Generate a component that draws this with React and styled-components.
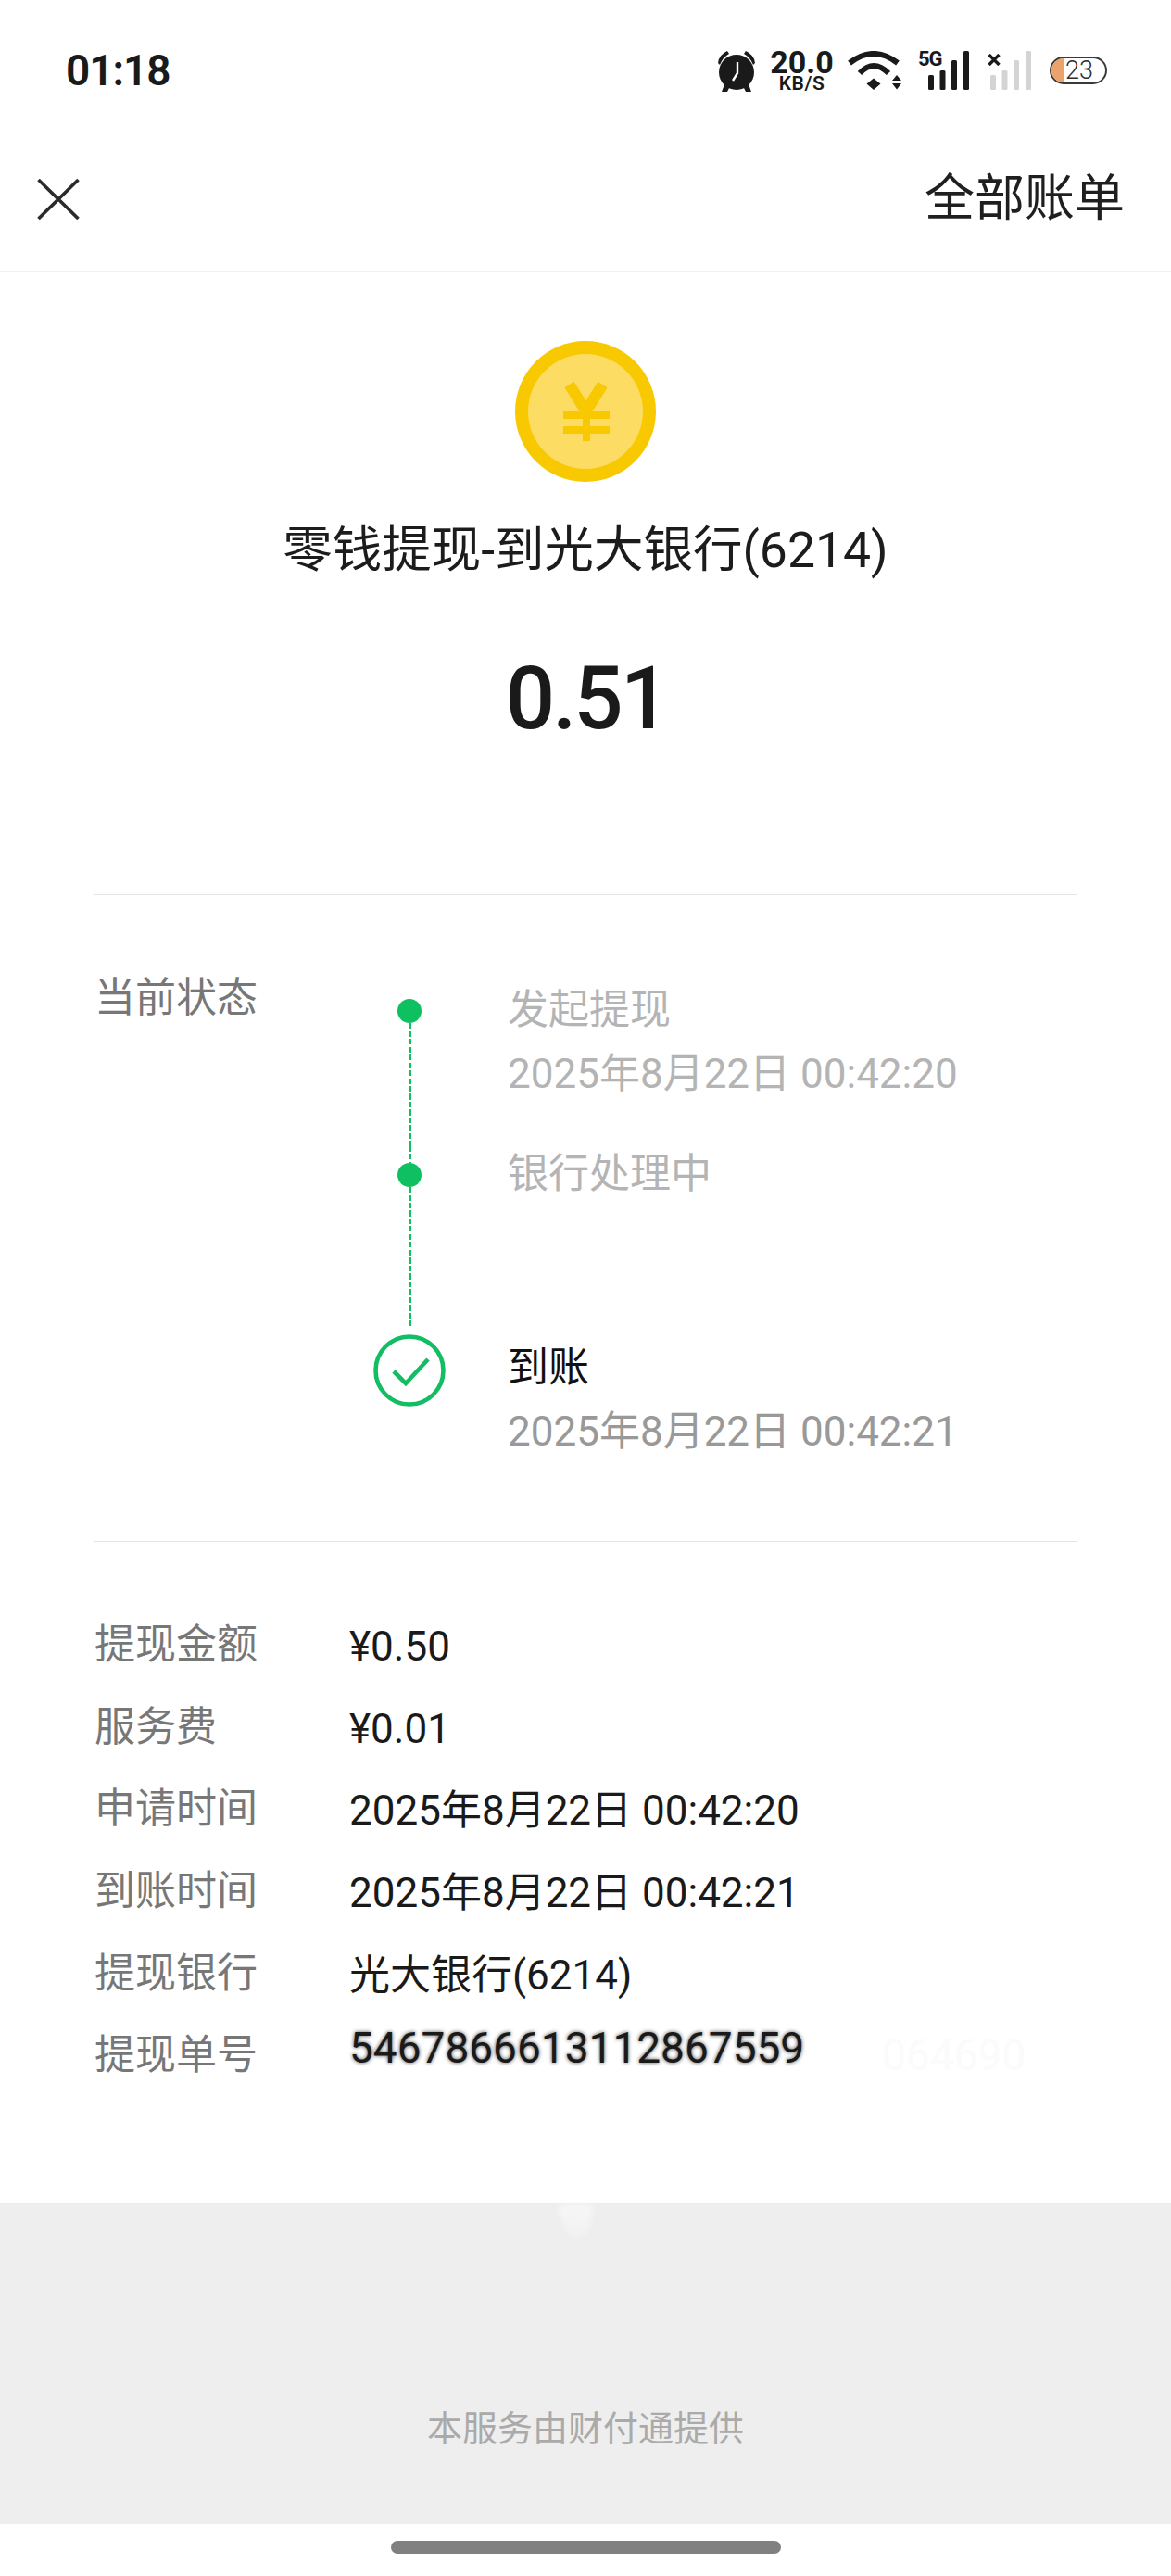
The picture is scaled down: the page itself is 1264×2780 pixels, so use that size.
import React from 'react';
import styled, { createGlobalStyle } from 'styled-components';

const GlobalStyle = createGlobalStyle`
  html, body {
    margin: 0;
    padding: 0;
    background: #fff;
  }
  * {
    box-sizing: border-box;
  }
`;

const details = [
  { label: '提现金额', value: '¥0.50' },
  { label: '服务费', value: '¥0.01' },
  { label: '申请时间', value: '2025年8月22日 00:42:20' },
  { label: '到账时间', value: '2025年8月22日 00:42:21' },
  { label: '提现银行', value: '光大银行(6214)' },
  { label: '提现单号', value: '5467866613112867559', smudged: true, ghost: '064690' },
];

function AlarmIcon() {
  return (
    <svg width="42" height="45" viewBox="0 0 42 45">
      <path d="M1 14 Q2 5 11 1 L13 4 Q6 8 3 16 Z" fill="#1a1a1a" />
      <path d="M41 14 Q40 5 31 1 L29 4 Q36 8 39 16 Z" fill="#1a1a1a" />
      <circle cx="21" cy="24" r="19" fill="#1a1a1a" />
      <path d="M8 37 L5 45 L11 45 L14 39 Z M34 37 L37 45 L31 45 L28 39 Z" fill="#1a1a1a" />
      <path d="M22 13 V25 L17 33" fill="none" stroke="#fff" strokeWidth="2.4" />
    </svg>
  );
}

function WifiIcon() {
  return (
    <svg width="58" height="42" viewBox="0 0 58 42">
      <path d="M2 13 Q28 -7 54 13" fill="none" stroke="#1a1a1a" strokeWidth="6" />
      <path d="M13 24 Q28 8 44 24" fill="none" stroke="#1a1a1a" strokeWidth="6" />
      <path d="M28 29.5 L35.5 35.5 L28 42 L20.5 35.5 Z" fill="#1a1a1a" />
      <path d="M53 26 L58 32 H48 Z M48 35 H58 L53 41.5 Z" fill="#1a1a1a" />
    </svg>
  );
}

function SignalBars({ color }) {
  return (
    <svg width="44" height="42" viewBox="0 0 44 42">
      <rect x="0" y="26" width="6" height="16" rx="1.5" fill={color} />
      <rect x="12.5" y="21" width="6" height="21" rx="1.5" fill={color} />
      <rect x="25" y="10" width="6" height="32" rx="1.5" fill={color} />
      <rect x="38" y="0" width="6" height="42" rx="1.5" fill={color} />
    </svg>
  );
}

function CrossMark() {
  return (
    <svg width="14" height="13" viewBox="0 0 14 13">
      <path d="M1.5 1 L12.5 12 M12.5 1 L1.5 12" stroke="#1a1a1a" strokeWidth="3.4" />
    </svg>
  );
}

function CloseIcon() {
  return (
    <svg width="46" height="44" viewBox="0 0 46 44">
      <path d="M1.5 1 L44.5 43 M44.5 1 L1.5 43" fill="none" stroke="#2b2b2b" strokeWidth="3.6" />
    </svg>
  );
}

function CoinIcon() {
  return (
    <svg width="152" height="152" viewBox="0 0 152 152">
      <circle cx="76" cy="76" r="76" fill="#f8c800" />
      <circle cx="76" cy="76" r="62" fill="#fcdc62" />
      <path d="M58.5 47 L76.5 76 L94.5 47" fill="none" stroke="#f8c800" strokeWidth="12" />
      <path d="M52 80 H102 M52 96 H102" stroke="#f8c800" strokeWidth="8" />
      <path d="M77 74 V108" stroke="#f8c800" strokeWidth="8" />
    </svg>
  );
}

function CheckNode() {
  return (
    <svg width="78" height="78" viewBox="0 0 78 78">
      <circle cx="39" cy="39" r="36.5" fill="none" stroke="#12bd63" strokeWidth="4.6" />
      <path d="M22 40 L35 53 L59 27" fill="none" stroke="#12bd63" strokeWidth="4.6" />
    </svg>
  );
}

export default function App() {
  return (
    <Page>
      <GlobalStyle />
      <StatusBar>
        <Clock>01:18</Clock>
        <StatusIcons>
          <AlarmIcon />
          <NetSpeed>
            <SpeedValue>20.0</SpeedValue>
            <SpeedUnit>KB/S</SpeedUnit>
          </NetSpeed>
          <WifiIcon />
          <SimSignal $lead={10}>
            <SimTag>5G</SimTag>
            <SignalBars color="#1a1a1a" />
          </SimSignal>
          <SimSignal $lead={4}>
            <NoSimTag>
              <CrossMark />
            </NoSimTag>
            <SignalBars color="#d4d4d4" />
          </SimSignal>
          <Battery>
            <BatteryFill />
            <BatteryLevel>23</BatteryLevel>
          </Battery>
        </StatusIcons>
      </StatusBar>

      <Header>
        <CloseIcon />
        <AllBills>全部账单</AllBills>
      </Header>

      <Hero>
        <CoinIcon />
        <Title>零钱提现-到光大银行(6214)</Title>
        <Amount>0.51</Amount>
      </Hero>

      <Divider />

      <StatusSection>
        <StatusLabel>当前状态</StatusLabel>
        <Steps>
          <Step $height={177}>
            <NodeColumn>
              <Dot />
              <DashLine />
            </NodeColumn>
            <StepText>
              <StepTitle>发起提现</StepTitle>
              <StepTime>2025年8月22日 00:42:20</StepTime>
            </StepText>
          </Step>
          <Step $height={209}>
            <NodeColumn $joined>
              <Dot />
              <DashLine $gapBelow={14} />
            </NodeColumn>
            <StepText>
              <StepTitle>银行处理中</StepTitle>
            </StepText>
          </Step>
          <Step>
            <NodeColumn $check>
              <CheckNode />
            </NodeColumn>
            <StepText>
              <StepTitle $done>到账</StepTitle>
              <StepTime $done>2025年8月22日 00:42:21</StepTime>
            </StepText>
          </Step>
        </Steps>
      </StatusSection>

      <Divider />

      <DetailList>
        {details.map((row) => (
          <DetailRow key={row.label}>
            <DetailLabel>{row.label}</DetailLabel>
            <DetailValue $smudged={row.smudged}>{row.value}</DetailValue>
            {row.ghost ? <GhostText>{row.ghost}</GhostText> : null}
          </DetailRow>
        ))}
      </DetailList>

      <Footer>
        <Glare />
        <FooterText>本服务由财付通提供</FooterText>
      </Footer>

      <NavArea>
        <HomeBar />
      </NavArea>
    </Page>
  );
}

const dashes = 'repeating-linear-gradient(to bottom, #0fc061 0 6px, transparent 6px 8.5px)';

const Page = styled.div`
  width: 1264px;
  height: 2780px;
  overflow: hidden;
  background: #fff;
  color: #1a1a1a;
  font-family: Roboto, 'Noto Sans CJK SC', sans-serif;
`;

const StatusBar = styled.div`
  height: 152px;
  padding: 0 69px 0 71px;
  display: flex;
  justify-content: space-between;
  align-items: center;
`;

const Clock = styled.div`
  font-size: 46px;
  font-weight: 600;
  letter-spacing: -1px;
  color: #1a1a1a;
`;

const StatusIcons = styled.div`
  display: flex;
  align-items: center;
  gap: 16px;
`;

const NetSpeed = styled.div`
  width: 67px;
  display: flex;
  flex-direction: column;
  align-items: center;
`;

const SpeedValue = styled.span`
  font-size: 34px;
  line-height: 27px;
  font-weight: 700;
`;

const SpeedUnit = styled.span`
  font-size: 21px;
  line-height: 18px;
  font-weight: 600;
  letter-spacing: 0.5px;
`;

const SimSignal = styled.div`
  position: relative;
  padding-left: 3px;
  margin-left: ${({ $lead }) => $lead}px;
  display: flex;
`;

const SimTag = styled.span`
  position: absolute;
  left: -8px;
  top: -3px;
  font-size: 22px;
  line-height: 24px;
  font-weight: 700;
  letter-spacing: -1px;
`;

const NoSimTag = styled.span`
  position: absolute;
  left: 0;
  top: 3px;
  display: flex;
`;

const Battery = styled.div`
  position: relative;
  width: 62px;
  height: 30px;
  margin-left: 4px;
  border: 2px solid #3a3a3a;
  border-radius: 15px;
  overflow: hidden;
  display: flex;
  align-items: center;
  padding-left: 15px;
`;

const BatteryFill = styled.div`
  position: absolute;
  left: 0;
  top: 0;
  bottom: 0;
  width: 14px;
  background: #eba26b;
`;

const BatteryLevel = styled.span`
  position: relative;
  font-size: 27px;
  line-height: 26px;
  font-weight: 300;
  color: #2e2e2e;
`;

const Header = styled.div`
  height: 142px;
  padding: 0 50px 14px 40px;
  display: flex;
  justify-content: space-between;
  align-items: center;
  border-bottom: 2px solid #f0f0f0;
`;

const AllBills = styled.div`
  font-size: 54px;
  line-height: 60px;
  color: #1f1f1f;
`;

const Hero = styled.div`
  padding: 74px 0 154px;
  display: flex;
  flex-direction: column;
  align-items: center;
`;

const Title = styled.div`
  margin-top: 38px;
  font-size: 53.5px;
  line-height: 72px;
  color: #1c1c1c;
`;

const Amount = styled.div`
  margin-top: 64px;
  margin-bottom: -3px;
  padding-left: 2px;
  font-size: 94px;
  line-height: 120px;
  font-weight: 500;
  letter-spacing: -3px;
  color: #1a1a1a;
`;

const Divider = styled.div`
  height: 1px;
  margin: 0 101px;
  background: #e4e4e4;
`;

const StatusSection = styled.div`
  padding: 81px 0 88px 102px;
  display: flex;
`;

const StatusLabel = styled.div`
  width: 301px;
  font-size: 44px;
  line-height: 60px;
  color: #777;
`;

const Steps = styled.div`
  margin-top: 13px;
  display: flex;
  flex-direction: column;
`;

const Step = styled.div`
  height: ${({ $height }) => ($height ? `${$height}px` : 'auto')};
  display: flex;
  gap: 67px;
`;

const NodeColumn = styled.div`
  position: relative;
  width: 78px;
  padding-top: ${({ $check }) => ($check ? '0' : '18px')};
  margin-top: ${({ $check }) => ($check ? '-6px' : '0')};
  display: flex;
  flex-direction: column;
  align-items: center;

  ${({ $joined }) =>
    $joined &&
    `
    &::before {
      content: '';
      position: absolute;
      top: 0;
      width: 3px;
      height: 18px;
      background: ${dashes};
    }
  `}
`;

const Dot = styled.div`
  width: 26px;
  height: 26px;
  flex: none;
  border-radius: 50%;
  background: #0fc061;
`;

const DashLine = styled.div`
  flex: 1;
  width: 3px;
  margin-bottom: ${({ $gapBelow }) => $gapBelow || 0}px;
  background: ${dashes};
`;

const StepText = styled.div`
  display: flex;
  flex-direction: column;
  gap: 9px;
`;

const StepTitle = styled.div`
  font-size: 44px;
  line-height: 60px;
  color: ${({ $done }) => ($done ? '#111' : '#b4b4b4')};
`;

const StepTime = styled.div`
  font-size: 44px;
  line-height: 60px;
  color: ${({ $done }) => ($done ? '#999' : '#b4b4b4')};
`;

const DetailList = styled.div`
  padding: 67px 0 114px 102px;
`;

const DetailRow = styled.div`
  height: 88.6px;
  display: flex;
  align-items: center;
`;

const DetailLabel = styled.div`
  width: 275px;
  font-size: 44px;
  line-height: 60px;
  color: #777;
`;

const DetailValue = styled.div`
  font-size: ${({ $smudged }) => ($smudged ? '46px' : '44px')};
  line-height: 60px;
  color: #1a1a1a;
  margin-top: ${({ $smudged }) => ($smudged ? '0' : '4px')};
  margin-bottom: ${({ $smudged }) => ($smudged ? '16px' : '0')};
  text-shadow: ${({ $smudged }) => ($smudged ? '0 0 4px rgba(0, 0, 0, 0.7)' : 'none')};
`;

const GhostText = styled.div`
  margin-left: 84px;
  font-size: 46px;
  line-height: 60px;
  color: #fbfbfb;
`;

const Footer = styled.div`
  position: relative;
  height: 347px;
  padding-top: 212px;
  background: #eeeeee;
  border-top: 2px solid #ebebeb;
  text-align: center;
`;

const Glare = styled.div`
  position: absolute;
  left: 604px;
  top: 0;
  width: 36px;
  height: 36px;
  border-radius: 0 0 18px 18px / 0 0 34px 34px;
  background: linear-gradient(to bottom, #f7f7f7, #f1f1f1);
  filter: blur(3px);
`;

const FooterText = styled.div`
  font-size: 38px;
  line-height: 60px;
  color: #aaaaaa;
`;

const NavArea = styled.div`
  height: 57px;
  padding-top: 18px;
  display: flex;
  justify-content: center;
`;

const HomeBar = styled.div`
  width: 421px;
  height: 14px;
  border-radius: 7px;
  background: #808080;
`;
